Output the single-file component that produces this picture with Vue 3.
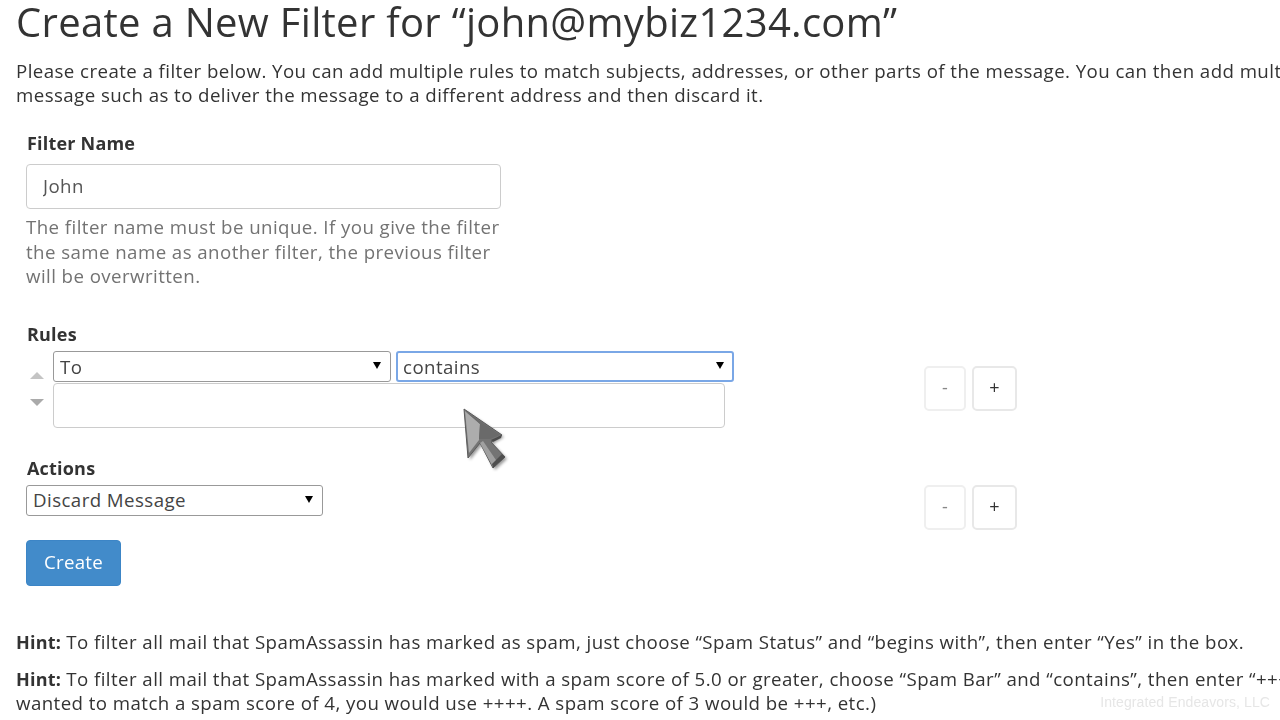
<script setup>
const hint1 = ' To filter all mail that SpamAssassin has marked as spam, just choose “Spam Status” and “begins with”, then enter “Yes” in the box.'
const hint2 = ' To filter all mail that SpamAssassin has marked with a spam score of 5.0 or greater, choose “Spam Bar” and “contains”, then enter “+++++” in the box. (If you'
const hint3 = 'wanted to match a spam score of 4, you would use ++++. A spam score of 3 would be +++, etc.)'
</script>

<template>
  <div class="page">
    <h1>Create a New Filter for “john@mybiz1234.com”</h1>
    <p class="intro">Please create a filter below. You can add multiple rules to match subjects, addresses, or other parts of the message. You can then add multiple actions to take on a<br>message such as to deliver the message to a different address and then discard it.</p>
    <form class="form" @submit.prevent>
      <label class="lbl">Filter Name</label>
      <input class="text name" value="John">
      <p class="help">The filter name must be unique. If you give the filter the same name as another filter, the previous filter will be overwritten.</p>
      <label class="lbl rules-lbl">Rules</label>
      <div class="row rule-row">
        <div class="arrows"><span class="up"></span><span class="down"></span></div>
        <div class="rule-fields">
          <div class="selects">
            <div class="select s1">To<i></i></div>
            <div class="select s2">contains<i></i></div>
          </div>
          <input class="text value">
        </div>
        <div class="pm rule-pm"><button type="button">-</button><button type="button">+</button></div>
      </div>
      <label class="lbl actions-lbl">Actions</label>
      <div class="row action-row">
        <div class="select s3">Discard Message<i></i></div>
        <div class="pm"><button type="button">-</button><button type="button">+</button></div>
      </div>
      <button class="create" type="button">Create</button>
    </form>
    <div class="hints">
      <p class="hint"><b>Hint:</b>{{ hint1 }}</p>
      <p class="hint"><b>Hint:</b>{{ hint2 }}<br>{{ hint3 }}</p>
    </div>
    <span class="mark">Integrated Endeavors, LLC</span>
    <svg class="cursor" width="60" height="75" viewBox="0 0 60 75">
      <defs>
        <filter id="cs" x="-30%" y="-30%" width="160%" height="160%"><feGaussianBlur stdDeviation="1.8"/></filter>
      </defs>
      <path d="M9 9 L13 58 L25 43 L38 68 L50 57 L36 42 L47 35 Z" fill="#000" opacity=".4" filter="url(#cs)" transform="translate(2 2)"/>
      <path d="M9 9 L13 58 L25 43 L38 68 L50 57 L36 42 L47 35 Z" fill="#747474" stroke="#5a5a5a" stroke-width="1"/>
      <path d="M10 11 L14 53 L24 40 L25 24 Z" fill="#adadad"/>
      <path d="M10 11 L25 24 L24 39 L35 39 L45 35 Z" fill="#6a6a6a"/>
      <path d="M25 43 L28 41 L43 63 L38 67 Z" fill="#a0a0a0"/>
      <path d="M36 40 L47 35 L46 38 L38 42 Z" fill="#4c4c4c"/>
      <path d="M38 68 L50 57 L47 54 L37 64 Z" fill="#4e4e4e"/>
    </svg>
  </div>
</template>

<style>
html, body { margin: 0; overflow: hidden; background: #fff; }
</style>

<style scoped>
.page { position: relative; width: 1280px; height: 720px; overflow: hidden; box-sizing: border-box; padding-left: 16px; font-family: "Open Sans", sans-serif; color: #333; font-size: 18.7px; letter-spacing: 0.425px; white-space: nowrap; filter: blur(0.35px); }
h1 { margin: 0; font-size: 40px; line-height: 44px; font-weight: 400; letter-spacing: 0.3px; }
.intro { margin: 15px 0 0; line-height: 24px; width: 1400px; }
.form { padding-left: 10px; margin-top: 24px; }
.lbl { display: block; margin-left: 1px; font-size: 18px; font-weight: 700; line-height: 24px; letter-spacing: 0.2px; }
.text { display: block; box-sizing: border-box; height: 45px; border: 1px solid #ccc; border-radius: 4px; padding: 0 16px 2px; font: 18.7px "Open Sans", sans-serif; letter-spacing: 0.425px; color: #555; background: #fff; outline: 0; }
.name { width: 475px; margin-top: 9px; }
.help { margin: 6px 0 0; width: 480px; white-space: normal; color: #737373; line-height: 24.5px; }
.rules-lbl { margin-top: 33px; }
.row { display: flex; }
.rule-row { width: 991px; height: 99px; margin-top: 5px; }
.arrows { width: 27px; position: relative; }
.up, .down { position: absolute; left: 4px; border-left: 7px solid transparent; border-right: 7px solid transparent; }
.up { top: 21px; border-bottom: 7px solid #c4c4c4; }
.down { top: 48px; border-top: 7px solid #aaa; }
.selects { display: flex; gap: 5px; }
.select { position: relative; box-sizing: border-box; height: 31px; line-height: 30px; padding-left: 6px; border: 1px solid #999; border-radius: 3px; background: #fff; color: #444; }
.select i { position: absolute; right: 9px; top: 10px; width: 0; height: 0; border-left: 4px solid transparent; border-right: 4px solid transparent; border-top: 7px solid #000; }
.s1 { width: 338px; }
.s2 { width: 338px; border: 2px solid #7aa7e6; padding-left: 5px; line-height: 28px; }
.s2 i { right: 8px; top: 9px; }
.s3 { width: 297px; line-height: 28px; }
.value { width: 672px; margin-top: 1px; }
.pm { display: flex; gap: 6px; margin-left: auto; }
.pm button { box-sizing: border-box; width: 45px; height: 45px; padding: 0 0 2px; border: 2px solid #e8e8e8; border-radius: 5px; background: #fff; color: #333; font: 18px "Open Sans", sans-serif; }
.pm button:first-child { width: 42px; color: #888; border-color: #efefef; }
.rule-pm { margin-top: 15px; }
.actions-lbl { margin-top: 6px; }
.action-row { width: 991px; height: 55px; margin-top: 5px; }
.create { display: block; box-sizing: border-box; width: 95px; height: 46px; padding: 0 0 2px; border: 1px solid #3c85c6; border-radius: 4px; background: #428bca; color: #fff; font: 18.7px "Open Sans", sans-serif; letter-spacing: 0.3px; }
.hints { margin-top: 44px; }
.hint { margin: 0 0 13px; line-height: 24px; width: 1400px; }
.hint b { font-size: 18px; font-weight: 700; letter-spacing: 0.2px; }
.mark { position: absolute; right: 10px; top: 694px; font: 14px "Liberation Sans", sans-serif; letter-spacing: 0.1px; color: #e6e6e6; }
.cursor { position: absolute; left: 455px; top: 400px; }
</style>
